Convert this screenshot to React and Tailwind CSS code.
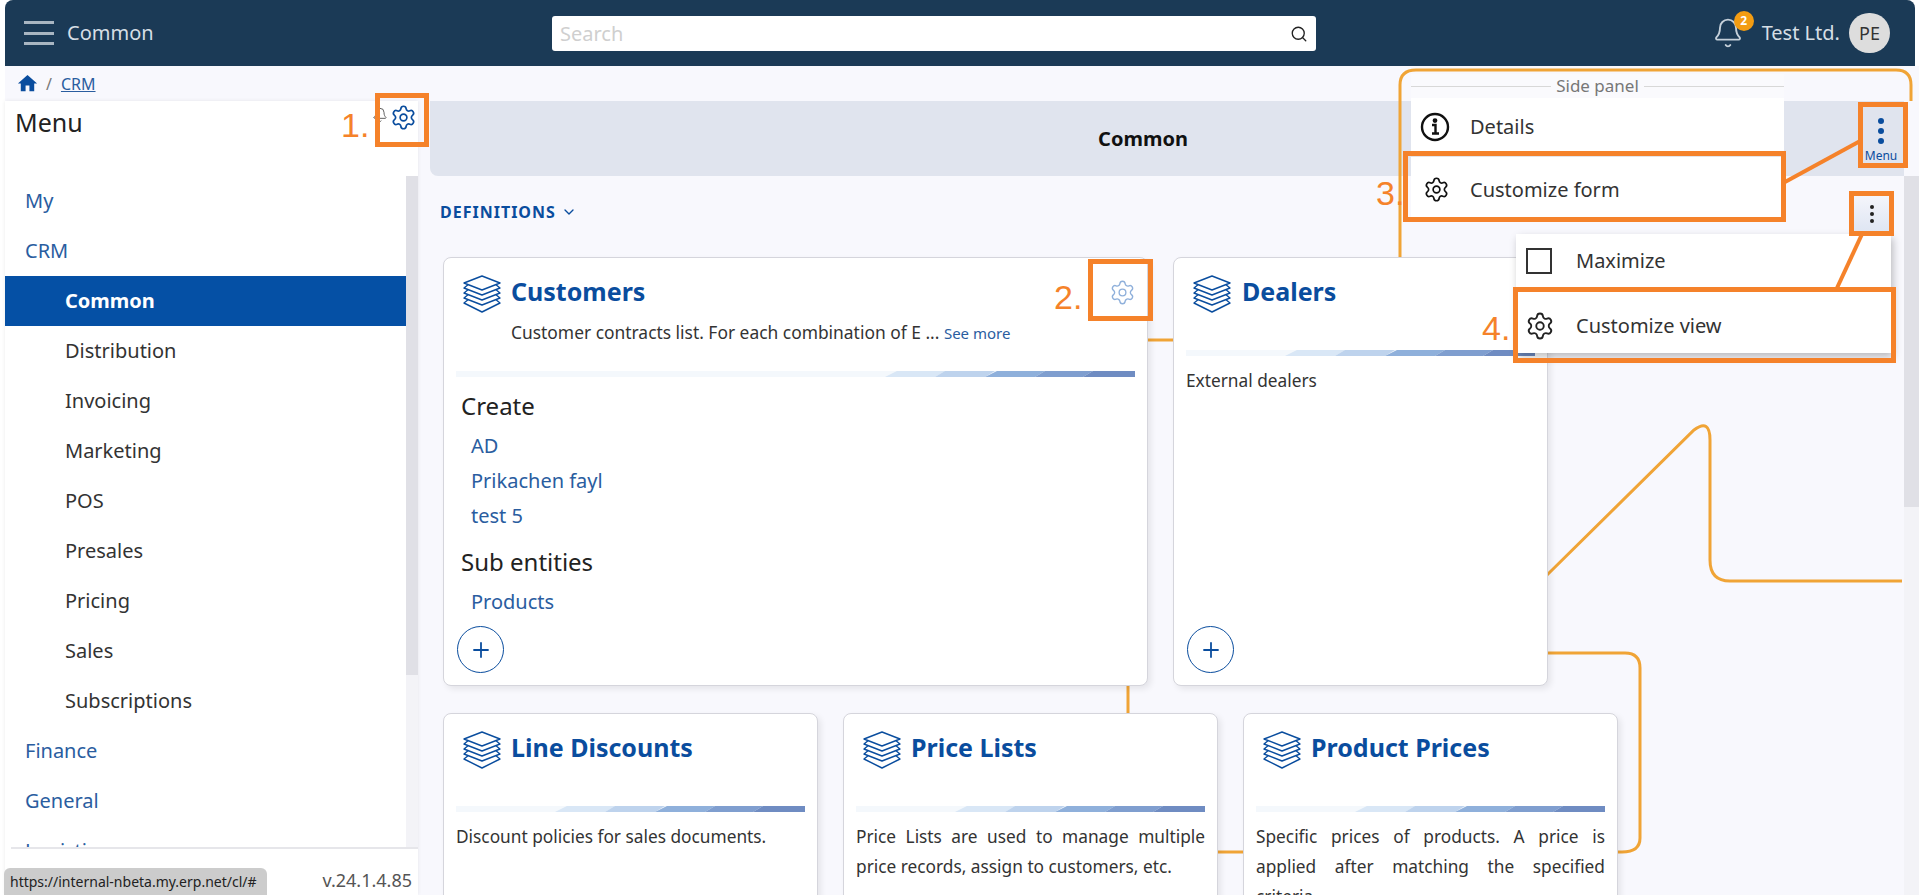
import { Bell, ChevronDown, Plus, Search, Settings } from 'lucide-react';
import { MdHome } from 'react-icons/md';

const menuItems = [
  { label: 'My' },
  { label: 'CRM' },
  { label: 'Common', active: true },
  { label: 'Distribution', sub: true },
  { label: 'Invoicing', sub: true },
  { label: 'Marketing', sub: true },
  { label: 'POS', sub: true },
  { label: 'Presales', sub: true },
  { label: 'Pricing', sub: true },
  { label: 'Sales', sub: true },
  { label: 'Subscriptions', sub: true },
  { label: 'Finance' },
  { label: 'General' },
  { label: 'Logistics' },
];

function StackIcon() {
  return (
    <svg width="38" height="39" viewBox="0 0 38 39" fill="none" stroke="#0a4d9e" strokeWidth="1.4" strokeLinejoin="round" className="shrink-0">
      <path d="M19 1 37 8 19 15 1 8Z" />
      <path d="M5 9.8 1 13 19 20 37 13 33 9.8" />
      <path d="M5 14.8 1 18 19 25 37 18 33 14.8" />
      <path d="M5 19.8 1 23 19 30 37 23 33 19.8" />
      <path d="M5 24.8 1 28 19 37 37 28 33 24.8" />
    </svg>
  );
}

// bar under the card title, the coloured part has a fixed width
function Strip() {
  const parts = [
    ['0,6 12,0 60,0 50,6', '#d9e7f6'],
    ['50,6 60,0 110,0 100,6', '#bed3ed'],
    ['100,6 112,0 160,0 150,6', '#8fb0db'],
    ['150,6 160,0 208,0 198,6', '#7f9ecf'],
    ['198,6 208,0 250,0 250,6', '#6f8cc2'],
  ];
  return (
    <div className="flex justify-end h-[6px] bg-[#f4f8fc]">
      <svg width="250" height="6" viewBox="0 0 250 6">
        {parts.map(([points, fill]) => (
          <polygon key={points} points={points} fill={fill} />
        ))}
      </svg>
    </div>
  );
}

function AddButton() {
  return (
    <div className="flex items-center justify-center w-[47px] h-[47px] ml-[1px] rounded-full border border-[#0a4d9e] text-[#0a4d9e]">
      <Plus size={24} strokeWidth={1.8} />
    </div>
  );
}

function SmallCard({ title, children }) {
  return (
    <div className="relative z-10 w-[375px] h-[300px] bg-white rounded-lg border border-[#d5d5dc] shadow-[3px_3px_6px_rgba(0,0,0,0.08)] px-[12px]">
      <div className="flex gap-[10px] pt-[17px] pl-[7px] h-[92px]">
        <StackIcon />
        <div className="-mt-[1px] text-[25px] leading-[34px] font-bold text-[#0a4d9e]">{title}</div>
      </div>
      <Strip />
      <p className="mt-[10px] text-[17.3px] leading-[30px] text-[#333] text-justify">{children}</p>
    </div>
  );
}

export default function App() {
  return (
    <div className="relative h-[895px] overflow-hidden bg-white pl-[5px] font-['Noto_Sans',sans-serif]">
      {/* Header */}
      <header className="flex items-center h-[66px] mr-[4px] rounded-t-lg bg-[#1b3a56] pl-[19px] pr-[25px]">
        <div className="flex items-center gap-[14px] w-[528px]">
          <div className="flex flex-col justify-between w-[30px] h-[24px]">
            <div className="h-[3px] bg-[#a9b6c2]" />
            <div className="h-[3px] bg-[#a9b6c2]" />
            <div className="h-[3px] bg-[#a9b6c2]" />
          </div>
          <span className="-ml-[1px] text-[20px] text-[#d6dee5]">Common</span>
        </div>
        <div className="flex items-center justify-between w-[764px] h-[35px] rounded-[3px] bg-white pl-[8px] pr-[8px] mt-[1px]">
          <span className="text-[20px] text-[#cfcfcf]">Search</span>
          <Search size={18} strokeWidth={1.8} className="text-[#222]" />
        </div>
        <div className="flex items-center ml-auto">
          <div className="relative mr-[18px]">
            <Bell size={32} strokeWidth={1.4} className="text-[#c5d0da]" />
            <div className="absolute -top-[6px] left-[22px] flex items-center justify-center w-[20px] h-[20px] rounded-full bg-[#f39c12] text-[12px] font-bold text-white">2</div>
          </div>
          <span className="text-[20px] text-[#d6dee5]">Test Ltd.</span>
          <div className="flex items-center justify-center w-[41px] h-[40px] ml-[9px] rounded-full bg-[#dddddd] text-[18px] text-[#333]">PE</div>
        </div>
      </header>

      <div className="bg-[#f8f8fd]">
        {/* Breadcrumb */}
        <div className="flex items-center h-[35px] pl-[11px] text-[16px]">
          <MdHome size={23} className="text-[#0a4d9e]" />
          <span className="ml-[7px] text-[#777]">/</span>
          <span className="ml-[9px] text-[#2a5d9f] underline">CRM</span>
        </div>

        <div className="flex h-[794px]">
          {/* Left menu */}
          <aside className="flex flex-col w-[413px] bg-white shadow-[0_0_4px_rgba(0,0,0,0.08)]">
            <div className="h-[75px] pl-[10px] text-[25px] leading-[42px] text-[#222]">Menu</div>
            <div className="flex flex-1 min-h-0">
              <nav className="flex-1 overflow-hidden">
                {menuItems.map((item) => (
                  <div
                    key={item.label}
                    className={
                      item.active
                        ? 'flex items-center h-[50px] pl-[60px] text-[20px] font-bold text-white bg-[#0550a5]'
                        : item.sub
                          ? 'flex items-center h-[50px] pl-[60px] text-[20px] text-[#333]'
                          : 'flex items-center h-[50px] pl-[20px] text-[20px] text-[#2a5d9f]'
                    }
                  >
                    {item.label}
                  </div>
                ))}
              </nav>
              <div className="w-[12px] bg-[#f3f3f7]">
                <div className="h-[499px] bg-[#e0e0e6]" />
              </div>
            </div>
            <div className="relative z-10 flex justify-end items-center h-[48px] ml-[6px] border-t-2 border-[#e6e6ea] bg-white pr-[6px] pt-[16px] text-[18px] text-[#555]">
              v.24.1.4.85
            </div>
          </aside>

          {/* Main */}
          <main className="flex-1 min-w-0 flex flex-col">
            <div className="flex items-center justify-center h-[75px] ml-[12px] mr-[15px] rounded-bl-lg bg-[#e0e4ee] pr-[48px] text-[20px] font-bold text-[#111]">
              Common
            </div>
            <div className="flex flex-1 min-h-0">
              <div className="flex-1 min-w-0 pl-[25px] overflow-hidden">
                <div className="flex items-center h-[81px] -ml-[3px] pb-[10px] text-[16px] font-bold tracking-[1px] text-[#0a4d9e]">
                  DEFINITIONS
                  <ChevronDown size={16} className="ml-[5px]" />
                </div>
                <div className="flex gap-[25px]">
                  <div className="relative z-10 flex flex-col w-[705px] h-[429px] bg-white rounded-lg border border-[#d5d5dc] shadow-[3px_3px_6px_rgba(0,0,0,0.08)] px-[12px]">
                    <div className="flex gap-[10px] pt-[17px] pl-[7px] h-[113px]">
                      <StackIcon />
                      <div>
                        <div className="-mt-[1px] text-[25px] leading-[34px] font-bold text-[#0a4d9e]">Customers</div>
                        <div className="mt-[12px] text-[17.4px] leading-[24px] text-[#333]">
                          Customer contracts list. For each combination of E ... <span className="text-[15px] text-[#2a5d9f]">See more</span>
                        </div>
                      </div>
                    </div>
                    <Strip />
                    <div className="pl-[5px] pt-[13px]">
                      <div className="text-[24px] leading-[32px] text-[#222]">Create</div>
                      <div className="pl-[10px] mt-[6px] text-[20px] leading-[35px] text-[#2a5d9f]">
                        <div>AD</div>
                        <div>Prikachen fayl</div>
                        <div>test 5</div>
                      </div>
                      <div className="mt-[13px] text-[24px] leading-[32px] text-[#222]">Sub entities</div>
                      <div className="pl-[10px] mt-[6px] text-[20px] leading-[35px] text-[#2a5d9f]">Products</div>
                    </div>
                    <div className="mt-auto mb-[12px]"><AddButton /></div>
                  </div>
                  <div className="relative z-10 flex flex-col w-[375px] h-[429px] bg-white rounded-lg border border-[#d5d5dc] shadow-[3px_3px_6px_rgba(0,0,0,0.08)] px-[12px]">
                    <div className="flex gap-[10px] pt-[17px] pl-[7px] h-[92px]">
                      <StackIcon />
                      <div className="-mt-[1px] ml-[1px] text-[25px] leading-[34px] font-bold text-[#0a4d9e]">Dealers</div>
                    </div>
                    <Strip />
                    <p className="mt-[10px] text-[17.3px] leading-[30px] text-[#333]">External dealers</p>
                    <div className="mt-auto mb-[12px]"><AddButton /></div>
                  </div>
                </div>
                <div className="flex gap-[25px] mt-[27px]">
                  <SmallCard title="Line Discounts">Discount policies for sales documents.</SmallCard>
                  <SmallCard title="Price Lists">Price Lists are used to manage multiple price records, assign to customers, etc.</SmallCard>
                  <SmallCard title="Product Prices">Specific prices of products. A price is applied after matching the specified criteria.</SmallCard>
                </div>
              </div>
              <div className="w-[15px] bg-[#f3f3f7]">
                <div className="h-[331px] bg-[#e0e0e6]" />
              </div>
            </div>
          </main>
        </div>
      </div>

      {/* Connector lines of the background drawing */}
      <svg className="absolute inset-0 pointer-events-none" width="1919" height="895" fill="none" stroke="#f0a436" strokeWidth="3">
        <path d="M1400 257V85Q1400 70 1416 70H1896Q1911 70 1911 85V101" />
        <path d="M1148 340H1173" />
        <path d="M1128 686V713" />
        <path d="M1547 575 1694 430Q1710 418 1710 440V560Q1710 581 1730 581H1902" />
        <path d="M1547 653H1625Q1640 653 1640 668V838Q1640 852 1622 852H1618" />
        <path d="M1218 852H1244" />
      </svg>

      {/* Side panel menu */}
      <div className="absolute z-20 left-[1411px] top-[74px] w-[373px] h-[146px] bg-white">
        <div className="flex items-center h-[24px] bg-[#fafafd] text-[17px] text-[#777]">
          <div className="flex-1 h-px bg-[#d8d8d8]" />
          <span className="px-[5px]">Side panel</span>
          <div className="flex-1 h-px bg-[#d8d8d8]" />
        </div>
        <div className="flex items-center h-[57px] pl-[9px] text-[20px] text-[#333]">
          <svg width="30" height="30" viewBox="0 0 30 30" fill="none" stroke="#111" strokeWidth="2.4">
            <circle cx="15" cy="15" r="13" />
            <path d="M12 13H15.5V21M12 21.5H19" />
            <circle cx="15" cy="8.6" r="1.2" fill="#111" />
          </svg>
          <span className="ml-[20px]">Details</span>
        </div>
        <div className="flex items-center h-[65px] pt-[2px] pl-[12px] border-t-2 border-[#e4e4e8] text-[20px] text-[#333]">
          <Settings size={27} strokeWidth={1.5} className="text-[#111]" />
          <span className="ml-[20px]">Customize form</span>
        </div>
      </div>

      {/* Card view menu */}
      <div className="absolute z-20 left-[1516px] top-[234px] w-[375px] h-[119px] bg-white shadow-[2px_4px_8px_rgba(0,0,0,0.25)]">
        <div className="flex items-center h-[53px] pl-[10px] text-[20px] text-[#333]">
          <div className="w-[26px] h-[26px] border-2 border-[#333]" />
          <span className="ml-[24px]">Maximize</span>
        </div>
        <div className="flex items-center h-[66px] pt-[10px] pl-[9px] border-t-2 border-[#e4e4e8] text-[20px] text-[#333]">
          <Settings size={30} strokeWidth={1.5} className="text-[#222]" />
          <span className="ml-[21px]">Customize view</span>
        </div>
      </div>

      {/* Buttons and gears that the callouts point at */}
      <Settings size={27} strokeWidth={1.5} className="absolute z-20 left-[390px] top-[104px] text-[#0a4d9e]" />
      <Bell size={16} strokeWidth={1.4} className="absolute z-20 left-[372px] top-[107px] text-[#555]" />
      <Settings size={27} strokeWidth={1.2} className="absolute z-20 left-[1109px] top-[279px] text-[#8fb0db]" />
      <div className="absolute z-20 left-[1860px] top-[107px] flex flex-col items-center w-[42px] text-[#0a4d9e]">
        <div className="w-[6px] h-[6px] mt-[11px] rounded-full bg-[#0a4d9e]" />
        <div className="w-[6px] h-[6px] mt-[4px] rounded-full bg-[#0a4d9e]" />
        <div className="w-[6px] h-[6px] mt-[4px] rounded-full bg-[#0a4d9e]" />
        <span className="mt-[4px] text-[12px] leading-[16px]">Menu</span>
      </div>
      <div className="absolute z-20 left-[1854px] top-[196px] flex flex-col items-center justify-center gap-[3px] w-[35px] h-[35px] bg-gradient-to-b from-[#f4f5fb] to-[#dfe6f3]">
        <div className="w-[4px] h-[4px] rounded-full bg-[#222]" />
        <div className="w-[4px] h-[4px] rounded-full bg-[#222]" />
        <div className="w-[4px] h-[4px] rounded-full bg-[#222]" />
      </div>

      {/* Status bar tooltip */}
      <div className="absolute z-30 left-[4px] top-[868px] w-[263px] h-[27px] rounded-tr-md rounded-tl-md bg-[#cccccc] pl-[6px] text-[14px] leading-[27px] whitespace-nowrap text-[#222]">
        https://internal-nbeta.my.erp.net/cl/#
      </div>

      {/* Orange callouts */}
      <div className="absolute z-30 left-[375px] top-[93px] w-[54px] h-[54px] border-[5px] border-[#f5822a]" />
      <div className="absolute z-30 left-[1088px] top-[259px] w-[65px] h-[62px] border-[5px] border-[#f5822a]" />
      <div className="absolute z-30 left-[1403px] top-[151px] w-[383px] h-[71px] border-[5px] border-[#f5822a]" />
      <div className="absolute z-30 left-[1858px] top-[102px] w-[50px] h-[66px] border-[5px] border-[#f5822a]" />
      <div className="absolute z-30 left-[1849px] top-[191px] w-[45px] h-[45px] border-[5px] border-[#f5822a]" />
      <div className="absolute z-30 left-[1513px] top-[287px] w-[383px] h-[76px] border-[5px] border-[#f5822a]" />
      <svg className="absolute z-30 inset-0 pointer-events-none" width="1919" height="895" fill="none" stroke="#f5822a" strokeWidth="4">
        <path d="M1785 182 1862 140" />
        <path d="M1863 232 1837 288" />
      </svg>
      <span className="absolute z-30 left-[341px] top-[105px] font-['Liberation_Sans',sans-serif] text-[34px] leading-[40px] text-[#f5822a]">1.</span>
      <span className="absolute z-30 left-[1054px] top-[277px] font-['Liberation_Sans',sans-serif] text-[34px] leading-[40px] text-[#f5822a]">2.</span>
      <span className="absolute z-30 left-[1376px] top-[173px] font-['Liberation_Sans',sans-serif] text-[34px] leading-[40px] text-[#f5822a]">3.</span>
      <span className="absolute z-30 left-[1482px] top-[308px] font-['Liberation_Sans',sans-serif] text-[34px] leading-[40px] text-[#f5822a]">4.</span>
    </div>
  );
}
